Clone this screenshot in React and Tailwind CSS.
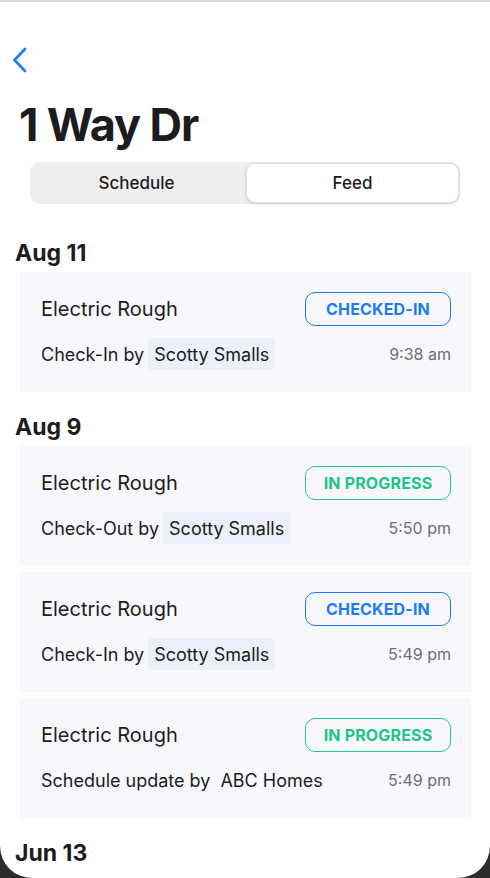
import React from 'react';

const feed = [
    {
        date: 'Aug 11',
        items: [
            { title: 'Electric Rough', status: 'checked', action: 'Check-In by', who: 'Scotty Smalls', chip: true, time: '9:38 am' },
        ],
    },
    {
        date: 'Aug 9',
        items: [
            { title: 'Electric Rough', status: 'progress', action: 'Check-Out by', who: 'Scotty Smalls', chip: true, time: '5:50 pm' },
            { title: 'Electric Rough', status: 'checked', action: 'Check-In by', who: 'Scotty Smalls', chip: true, time: '5:49 pm' },
            { title: 'Electric Rough', status: 'progress', action: 'Schedule update by', who: 'ABC Homes', chip: false, time: '5:49 pm' },
        ],
    },
    { date: 'Jun 13', items: [] },
];

const StatusBadge = ({ status }) => {
    if (status === 'checked') {
        return (
            <span className="flex h-[34px] w-[146px] items-center justify-center rounded-[10px] border-[1.5px] border-[#1b7cf4] text-[16px] font-bold tracking-[0.01em] text-[#1b7cf4]">
                CHECKED-IN
            </span>
        );
    }
    return (
        <span className="flex h-[34px] w-[146px] items-center justify-center rounded-[10px] border-[1.5px] border-[#22c98d] text-[16px] font-bold tracking-[0.01em] text-[#1fc489]">
            IN PROGRESS
        </span>
    );
};

const FeedCard = ({ item }) => (
    <div className="bg-[#f8f8fc] pl-[21px] pr-[20px] pt-[20px] pb-[22px]">
        <div className="flex items-center justify-between">
            <span className="text-[20px] text-[#1c1c1e]">{item.title}</span>
            <StatusBadge status={item.status} />
        </div>
        <div className="mt-[12px] flex items-center justify-between">
            <div className="flex items-center text-[18px] text-[#1c1c1e]">
                <span>{item.action}</span>
                <span className={`ml-[4px] flex h-[32px] items-center rounded-[4px] px-[6px] ${item.chip ? 'bg-[#ecf0fa]' : ''}`}>
                    {item.who}
                </span>
            </div>
            <span className="text-[16px] text-[#6e6e73]">{item.time}</span>
        </div>
    </div>
);

const App = () => {
    return (
        <div className="h-[878px] w-full bg-[#2c2c2c]" style={{ fontFamily: 'Inter, "Noto Sans", sans-serif' }}>
            <div className="h-full overflow-hidden rounded-b-[32px] bg-white">
                <div className="h-[2px] bg-[#dadada]" />

                <div className="pl-[12px] pt-[45px]">
                    <svg width="16" height="26" viewBox="0 0 16 26" fill="none">
                        <path d="M13 2 L2.5 13 L13 24" stroke="#1b7cf4" strokeWidth="2.6" strokeLinecap="round" strokeLinejoin="round" />
                    </svg>
                </div>

                <h1 className="mt-[29px] pl-[19px] text-[45px] font-bold leading-[46px] tracking-[-0.025em] text-[#1c1c1e]">
                    1 Way Dr
                </h1>

                <div className="mx-[30px] mt-[14px] flex h-[42px] rounded-[10px] bg-[#eeeeef] p-[1px]">
                    <button className="flex-1 pt-[2px] text-[17px] font-medium text-[#1c1c1e]">Schedule</button>
                    <button className="ml-[4px] flex-1 rounded-[9px] border border-[#e2e2e2] bg-white pt-[2px] text-[17px] font-medium text-[#1c1c1e] shadow-[0_1px_3px_rgba(0,0,0,0.15)]">
                        Feed
                    </button>
                </div>

                <div className="mt-[35px] flex flex-col gap-[21px]">
                    {feed.map((group) => (
                        <section key={group.date}>
                            <h2 className="pl-[15px] text-[23px] font-bold leading-[28px] text-[#1c1c1e]">{group.date}</h2>
                            {group.items.length > 0 && (
                                <div className="ml-[20px] mr-[19px] mt-[5px] flex flex-col gap-[6px]">
                                    {group.items.map((item, i) => (
                                        <FeedCard key={i} item={item} />
                                    ))}
                                </div>
                            )}
                        </section>
                    ))}
                </div>
            </div>
        </div>
    );
};

export default App;
